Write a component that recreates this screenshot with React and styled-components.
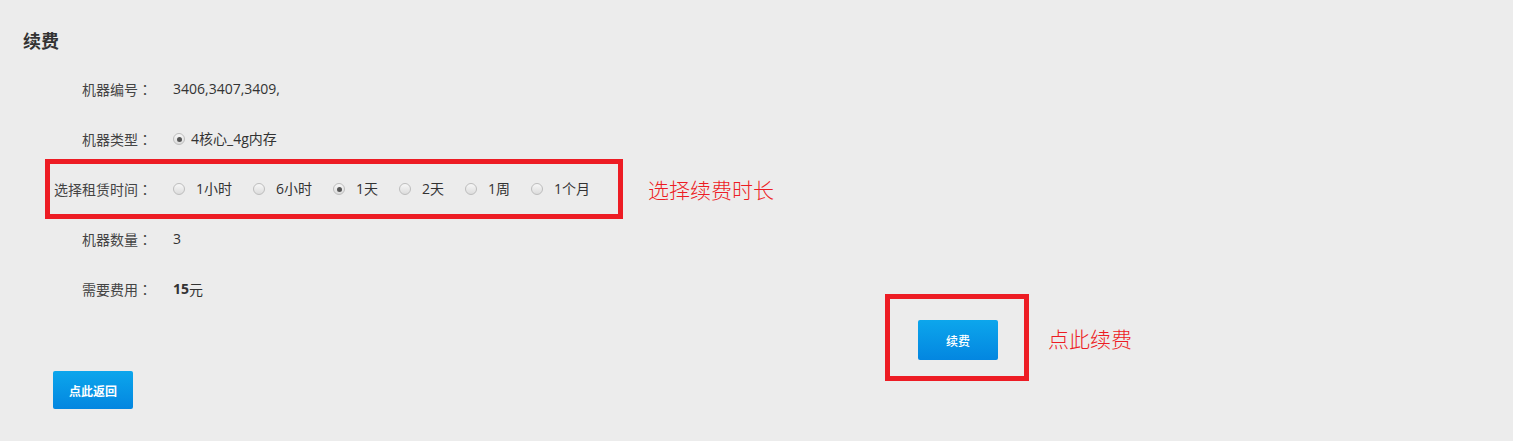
import styled, { createGlobalStyle } from 'styled-components'

const GlobalStyle = createGlobalStyle`
  html, body {
    margin: 0;
    padding: 0;
    height: 100%;
    background: #ececec;
  }
  body {
    font-family: "Noto Sans CJK SC", "Open Sans", sans-serif;
    color: #333;
  }
`

const Page = styled.div`
  min-height: 441px;
  background: #ececec;
`

const Title = styled.h2`
  margin: 0;
  padding: 26px 0 0 23px;
  font-size: 18px;
  line-height: 28px;
  font-weight: bold;
  color: #333;
`

const Form = styled.div`
  display: flex;
  flex-direction: column;
  padding-left: 50px;
  margin-top: 10px;
`

const Row = styled.div`
  display: flex;
  align-items: center;
  height: 50px;
  color: #333;
`

const Label = styled.span`
  width: 102px;
  text-align: right;
  font-size: 14px;
  line-height: 20px;
  flex-shrink: 0;
  color: #444;
`

const Colon = styled.span`
  font-family: "Noto Sans CJK TC", sans-serif;
`

const Value = styled.span`
  margin-left: 21px;
  font-size: 14px;
  line-height: 20px;
  font-family: "Open Sans", "Noto Sans CJK SC", sans-serif;
  display: flex;
  align-items: center;
  color: #333;
`

const Strong = styled.b`
  font-weight: bold;
  font-family: "Open Sans", sans-serif;
`

const Cny = styled.span`
  font-family: "Noto Sans CJK SC", sans-serif;
`

const HintLine = styled.div`
  display: flex;
  align-items: center;
  margin: -5px 0 -5px -5px;
`

const Marker = styled.div`
  border: 5px solid #ed1c24;
  box-sizing: border-box;
  width: ${p => p.w}px;
  padding: ${p => p.pad || '0'};
`

const Hint = styled.span`
  margin-left: ${p => p.gap}px;
  color: #ed1c24;
  font-size: 21px;
  font-weight: 300;
  line-height: 28px;
  font-family: "Noto Sans CJK SC", sans-serif;
`

const Options = styled.div`
  display: flex;
  align-items: center;
  margin-left: 21px;
`

const Option = styled.label`
  display: flex;
  align-items: center;
  margin-right: 21px;
  font-size: 14px;
  font-family: "Open Sans", "Noto Sans CJK SC", sans-serif;
  color: #333;
  line-height: 20px;
`

const Dot = styled.span`
  position: relative;
  width: 12px;
  height: 12px;
  border-radius: 50%;
  box-sizing: border-box;
  border: 1px solid #bdbdbd;
  background: linear-gradient(#f7f7f7, #dcdcdc);
  margin-right: ${p => p.gap ?? 11}px;
  flex-shrink: 0;
  &::after {
    content: '';
    display: ${p => (p.checked ? 'block' : 'none')};
    position: absolute;
    left: 2.5px;
    top: 2.5px;
    width: 5px;
    height: 5px;
    border-radius: 50%;
    background: #555;
  }
`

const Footer = styled.div`
  display: flex;
  height: 115px;
  margin-top: -20px;
`

const BlueButton = styled.button`
  width: 80px;
  height: ${p => p.h}px;
  border: none;
  border-radius: 2px;
  background: linear-gradient(#0ca6ec, #0386e0);
  color: #fff;
  font-size: 12px;
  font-weight: ${p => (p.bold ? 'bold' : 500)};
  font-family: "Noto Sans CJK SC", sans-serif;
  cursor: pointer;
  padding: 0;
`

const BackWrap = styled.div`
  align-self: flex-end;
  margin-left: 53px;
  display: flex;
`

const Action = styled.div`
  align-self: flex-start;
  margin-left: 752px;
  display: flex;
  align-items: center;
`

const durations = ['1小时', '6小时', '1天', '2天', '1周', '1个月']

const Field = ({ label, children }) => (
  <Row>
    <Label>
      {label}
      <Colon>：</Colon>
    </Label>
    {children}
  </Row>
)

export default function App() {
  return (
    <Page>
      <GlobalStyle />
      <Title>续费</Title>
      <Form>
        <Field label="机器编号">
          <Value>3406,3407,3409,</Value>
        </Field>
        <Field label="机器类型">
          <Value>
            <Dot checked gap={6} />
            4核心_4g内存
          </Value>
        </Field>
        <HintLine>
          <Marker w={578}>
            <Field label="选择租赁时间">
              <Options>
                {durations.map(d => (
                  <Option key={d}>
                    <Dot checked={d === '1天'} />
                    {d}
                  </Option>
                ))}
              </Options>
            </Field>
          </Marker>
          <Hint gap={25}>选择续费时长</Hint>
        </HintLine>
        <Field label="机器数量">
          <Value>3</Value>
        </Field>
        <Field label="需要费用">
          <Value>
            <Strong>15</Strong>
            <Cny>元</Cny>
          </Value>
        </Field>
      </Form>
      <Footer>
        <BackWrap>
          <BlueButton h={38} bold>点此返回</BlueButton>
        </BackWrap>
        <Action>
          <Marker w={144} pad="21px 26px 16px 28px">
            <BlueButton h={40}>续费</BlueButton>
          </Marker>
          <Hint gap={19}>点此续费</Hint>
        </Action>
      </Footer>
    </Page>
  )
}
